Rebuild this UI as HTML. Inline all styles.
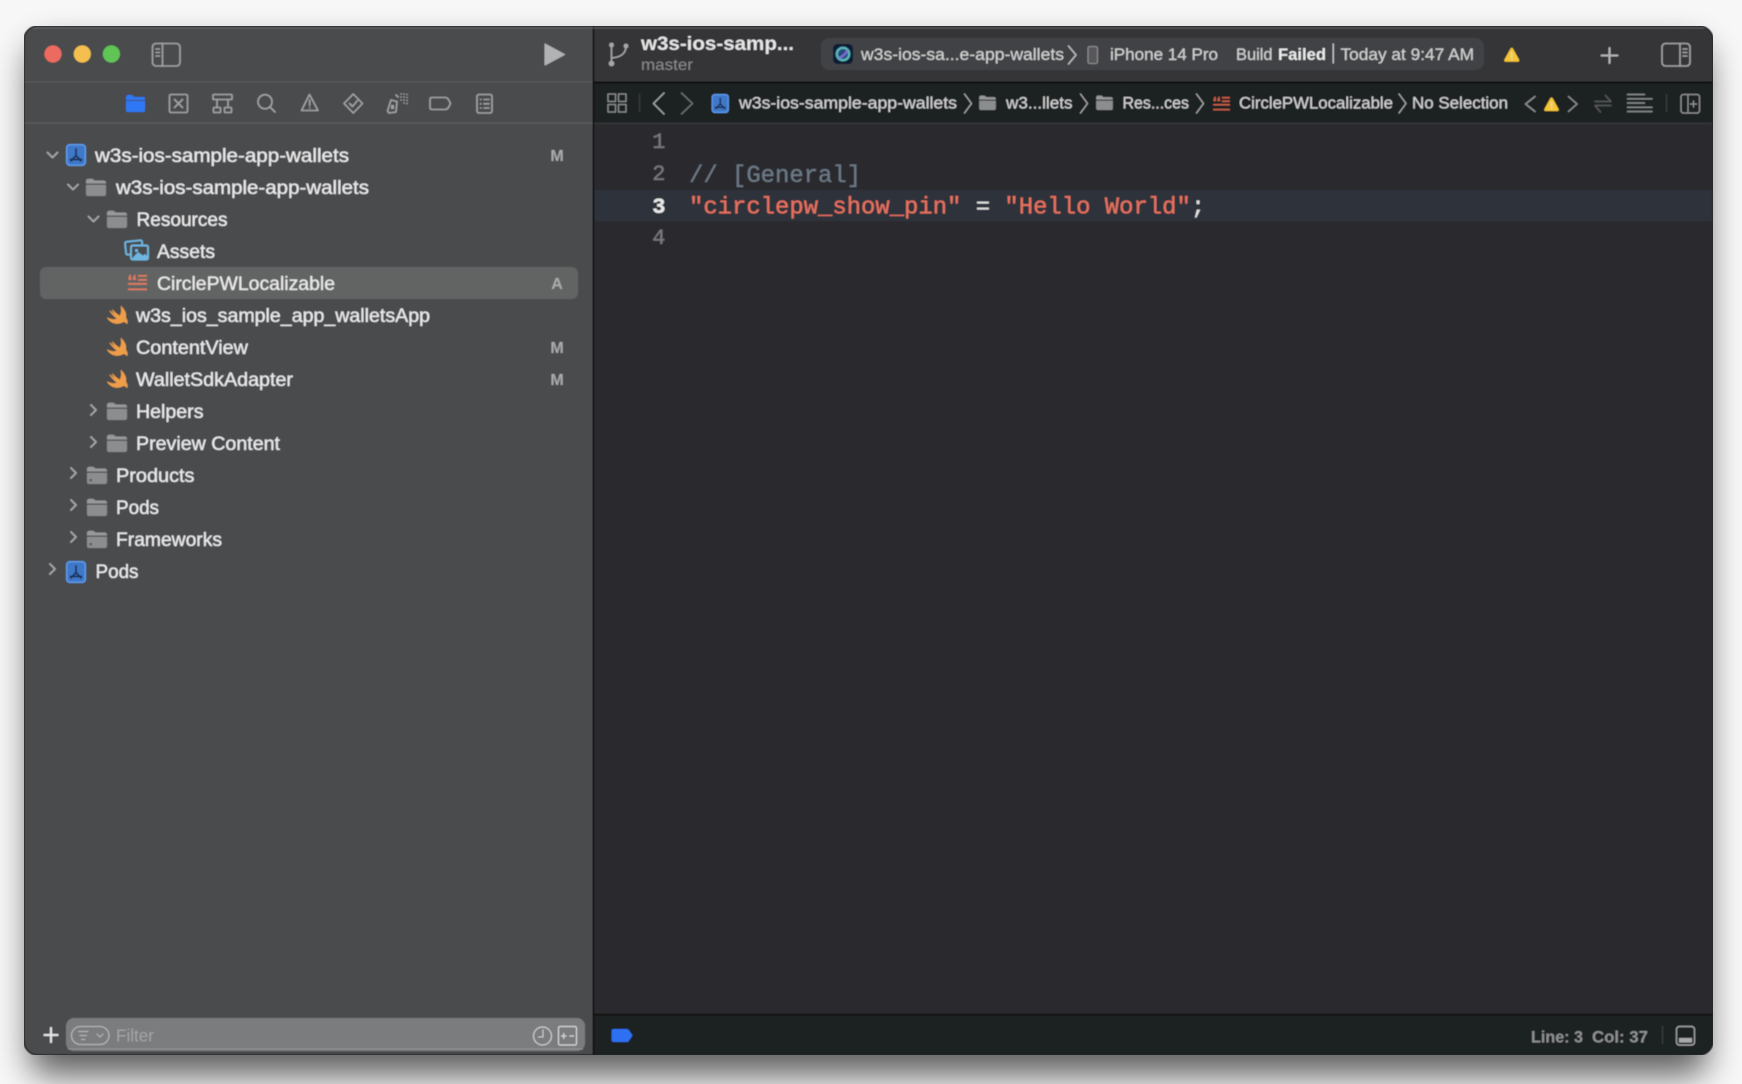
<!DOCTYPE html>
<html><head><meta charset="utf-8"><style>
html,body{margin:0;padding:0;background:#f7f7f7;width:1742px;height:1084px;overflow:hidden}
svg{display:block;position:absolute;left:0;top:0}
text{font-family:"Liberation Sans",sans-serif}
.m{font-family:"Liberation Mono",monospace}
.side{font-size:19.5px;fill:#e9e9ea;stroke:#e9e9ea;stroke-width:.3}
.nav{font-size:17px;fill:#d2d2d3;stroke:#d2d2d3;stroke-width:.15}
.top{font-size:17px;fill:#d0d0d1;stroke:#d0d0d1;stroke-width:.15}
.bdg{font-size:16px;font-weight:bold;fill:#a9aaab;text-anchor:middle}
.ic{fill:none;stroke:#a2a3a5;stroke-width:1.6;stroke-linecap:round;stroke-linejoin:round}
.chev{fill:none;stroke:#a5a6a7;stroke-width:1.9;stroke-linecap:round;stroke-linejoin:round}
.bc{fill:none;stroke:#a8a8a9;stroke-width:1.3;stroke-linecap:round;stroke-linejoin:round}
.ln{font-size:22px;fill:#77787c;stroke:#77787c;stroke-width:.3;text-anchor:end}
</style></head><body>
<svg width="1742" height="1084" viewBox="0 0 1742 1084" xmlns="http://www.w3.org/2000/svg">
<defs>
<filter id="sh" x="-10%" y="-10%" width="120%" height="120%"><feGaussianBlur stdDeviation="17"/></filter>
<filter id="b" x="0" y="0" width="100%" height="100%"><feGaussianBlur stdDeviation="0.6"/></filter>
<clipPath id="win"><rect x="24" y="26" width="1689" height="1029" rx="14"/></clipPath>
<symbol id="folder" viewBox="0 0 20 18" overflow="visible">
<path d="M0 3.5C0 1.5 1 .8 2.3.8H6.5L8.5 2.5H17.7C19 2.5 20 3.3 20 4.8V5.5H0Z" fill="#98999b"/>
<path d="M0 6.7H20V16C20 17.2 19.2 18 18 18H2C.8 18 0 17.2 0 16Z" fill="#8c8d8f"/>
</symbol>
<symbol id="folder2" viewBox="0 0 20 18" overflow="visible">
<path d="M0 3.5C0 1.5 1 .8 2.3.8H6.5L8.5 2.5H17.7C19 2.5 20 3.3 20 4.8V5.5H0Z" fill="#98999b"/>
<path d="M0 6.7H20V16C20 17.2 19.2 18 18 18H2C.8 18 0 17.2 0 16Z" fill="#8c8d8f"/>
<rect x="2.5" y="13" width="2.5" height="2.2" fill="#56575a"/>
</symbol>
<symbol id="proj" viewBox="0 0 20 22" overflow="visible">
<rect x=".7" y=".7" width="18.6" height="20.6" rx="3" fill="#3f78c9" stroke="#5f9cec" stroke-width="1.4"/>
<path d="M10 5V11.5M10 11.5L5 17M10 11.5L15 17M4.5 15.5H15.5" fill="none" stroke="#1e3358" stroke-width="1.8" stroke-linecap="round"/>
</symbol>
<symbol id="swift" viewBox="0 0 20 18" overflow="visible">
<path d="M13.5 0C17 3 19 7.5 18 11C19.3 13 20 15.2 19.5 17C18.3 15.4 16.5 14.7 14.8 15.6C10.5 18 4 17.2 0 11.5C3.5 13.5 7.5 13.7 10 12.3C7 10 4.5 7.5 2.5 4.5C5 6.8 7.5 8.8 9.5 10C7.5 8 6 6 5 3.5C8 6.8 10.5 8.8 12.5 9.6C14 7 14.5 3.5 13.5 0Z" fill="#ee9d48" stroke="#ee9d48" stroke-width=".9" stroke-linejoin="round"/>
</symbol>
<symbol id="warn" viewBox="0 0 16 15" overflow="visible">
<path d="M8 .5C8.6.5 9 .9 9.3 1.4L15.6 12.8C16.1 13.8 15.5 15 14.4 15H1.6C.5 15-.1 13.8.4 12.8L6.7 1.4C7 .9 7.4.5 8 .5Z" fill="#f4c534"/>
<rect x="7.1" y="5" width="1.8" height="5.5" fill="#e8dfb8" opacity=".75"/>
<rect x="7.1" y="11.4" width="1.8" height="1.8" fill="#e8dfb8" opacity=".75"/>
</symbol>
<symbol id="strs" viewBox="0 0 19 17" overflow="visible">
<path d="M.5 4.5C.5 2 1.5.8 3 .4V2C2.5 2.3 2.3 2.8 2.3 3H3.4V6H.5ZM5 4.5C5 2 6 .8 7.5.4V2C7 2.3 6.8 2.8 6.8 3H7.9V6H5Z" fill="currentColor"/>
<rect x="10" y="1" width="9" height="1.8" fill="currentColor"/><rect x="10" y="5" width="9" height="1.8" fill="currentColor"/>
<rect x="0" y="9" width="19" height="1.8" fill="currentColor"/><rect x="0" y="14.5" width="19" height="1.8" fill="currentColor"/>
</symbol>
</defs>

<rect x="30" y="46" width="1677" height="1029" rx="16" fill="#000" opacity=".62" filter="url(#sh)"/>

<g filter="url(#b)">
<g clip-path="url(#win)">
<rect x="24" y="26" width="570" height="1029" fill="#4a4b4d"/>
<rect x="594" y="26" width="1119" height="57" fill="#353638"/>
<rect x="594" y="83" width="1119" height="40" fill="#1f2022"/>
<rect x="594" y="123" width="1119" height="892" fill="#292a2f"/>
<rect x="594" y="1015" width="1119" height="40" fill="#1f2022"/>
<rect x="594" y="190" width="1119" height="31" fill="#2f323a"/>
<rect x="24" y="81.5" width="570" height="1" fill="#5d5e60"/>
<rect x="24" y="122.5" width="570" height="1.2" fill="#5d5e60"/>
<rect x="594" y="81.5" width="1119" height="1.8" fill="#0f0f10"/>
<rect x="594" y="122.8" width="1119" height="1" fill="#3c3d40"/>
<rect x="594" y="1013.8" width="1119" height="1.6" fill="#0f0f11"/>
<rect x="592.6" y="26" width="1.6" height="1029" fill="#101011"/>
<rect x="24" y="27.5" width="1689" height="1" fill="#69696b" opacity=".8"/>
</g>
<rect x="24" y="26" width="1689" height="1029" rx="14" fill="none" stroke="#202021" stroke-width="1.5"/>

<!-- traffic lights -->
<circle cx="53" cy="54" r="8.6" fill="#ec6a5e"/>
<circle cx="82.3" cy="54" r="8.6" fill="#f4bf4f"/>
<circle cx="111.4" cy="54" r="8.6" fill="#61c554"/>
<rect x="152.5" y="43.5" width="27.5" height="22.5" rx="3.5" class="ic"/>
<path d="M162.5 43.5V66" class="ic"/>
<path d="M156 49H159.5M156 52.5H159.5M156 56H159.5" class="ic" stroke-width="1.1"/>
<path d="M545 44V65L564.5 54.5Z" fill="#b1b2b3" stroke="#b1b2b3" stroke-width="1" stroke-linejoin="round"/>

<!-- navigator tabs -->
<path d="M126 99C126 96 127 95 128 95H132L134 97H143.5C144.5 97 145 97.8 145 99V100H126Z" fill="#2f78f6"/>
<path d="M126 101H145V110.5C145 111.5 144.5 112 143.5 112H127.5C126.5 112 126 111.5 126 110.5Z" fill="#2f78f6"/>
<rect x="169.5" y="94.5" width="18" height="18" rx="1.5" class="ic"/>
<path d="M174.5 99.5L182.5 107.5M182.5 99.5L174.5 107.5" class="ic"/>
<rect x="213" y="94.5" width="19" height="5" rx=".8" class="ic"/>
<path d="M217 99.5V107.5M228 99.5V107.5" class="ic"/>
<rect x="213.5" y="107.5" width="7" height="5" rx=".8" class="ic"/><rect x="224.5" y="107.5" width="7" height="5" rx=".8" class="ic"/>
<circle cx="265" cy="101.7" r="7" class="ic"/><path d="M270 107L275 112" class="ic" stroke-width="2"/>
<path d="M309.5 94.5L301.5 110.5H318Z" class="ic"/><path d="M309.7 100V105.5" class="ic"/><path d="M309.7 108H309.8" class="ic"/>
<path d="M353.3 94L362.5 103.5L353.3 113L344 103.5Z" class="ic"/><path d="M349.5 103.5L352.5 106.5L357.5 100.5" class="ic"/>
<path d="M391 100L397 101.5L396 112L389 113L387.5 111Z" class="ic"/><rect x="391" y="105" width="3" height="4" fill="#a2a3a5"/>
<path d="M396 95L398 97M401 94H401.2M404 94H404.2M407 94.5H407.2M401 97H401.2M404 97H404.2M407 97.5H407.2M401 100H401.2M404 100H404.2M407 100.5H407.2M404 103H404.2M407 103.5H407.2" class="ic" stroke-width="1.1"/>
<path d="M432 97.5H445C447 97.5 448 98 450.5 103.5C448 109 447 109.5 445 109.5H432C430.8 109.5 430 108.7 430 107.5V99.5C430 98.3 430.8 97.5 432 97.5Z" class="ic"/>
<rect x="477" y="94.5" width="15" height="18.5" rx="2" class="ic"/>
<path d="M480.5 99.5H481M484 99.5H489M480.5 103.8H481M484 103.8H489M480.5 108H481M484 108H489" class="ic" stroke-width="1.3"/>

<!-- selected row -->
<rect x="40" y="267" width="538" height="32" rx="6" fill="#626364"/>

<!-- tree chevrons -->
<path d="M47.5 152.5L52.5 157.5L57.5 152.5" class="chev"/>
<path d="M68 184.5L73 189.5L78 184.5" class="chev"/>
<path d="M88.5 216.5L93.5 221.5L98.5 216.5" class="chev"/>
<path d="M91 405L96 410L91 415M91 437L96 442L91 447M71 468L76 473L71 478M71 500L76 505L71 510M71 532L76 537L71 542M50 564L55 569L50 574" class="chev"/>

<!-- tree icons -->
<use href="#proj" x="66" y="144" width="20" height="22"/>
<use href="#folder" x="86" y="178" width="20" height="18"/>
<use href="#folder" x="107" y="210" width="20" height="18"/>
<g fill="none" stroke="#6fb6e0" stroke-width="1.9" stroke-linejoin="round">
<rect x="125.5" y="241" width="17" height="13" rx="1.5" transform="rotate(-6 134 247)"/>
<rect x="131" y="245.5" width="17" height="14" rx="1.5" fill="#4a4b4d"/>
<path d="M131.5 259L138 252L143 255.5L145 254L148 256.5V259.5H131.5Z" fill="#6fb6e0" stroke="none"/>
<circle cx="136.5" cy="250.5" r="1.6" fill="#6fb6e0" stroke="none"/>
</g>
<use href="#strs" x="128" y="274" width="19" height="17" color="#de7a5e"/>
<use href="#swift" x="107.5" y="306.5" width="20" height="18"/>
<use href="#swift" x="107.5" y="338.5" width="20" height="18"/>
<use href="#swift" x="107.5" y="370.5" width="20" height="18"/>
<use href="#folder" x="107" y="402" width="20" height="18"/>
<use href="#folder" x="107" y="434" width="20" height="18"/>
<use href="#folder2" x="87" y="466" width="20" height="18"/>
<use href="#folder" x="87" y="498" width="20" height="18"/>
<use href="#folder2" x="87" y="530" width="20" height="18"/>
<use href="#proj" x="66" y="561" width="20" height="22"/>

<!-- tree text -->
<text class="side" x="95" y="162" textLength="254" lengthAdjust="spacingAndGlyphs">w3s-ios-sample-app-wallets</text>
<text class="side" x="116" y="194" textLength="253" lengthAdjust="spacingAndGlyphs">w3s-ios-sample-app-wallets</text>
<text class="side" x="136.5" y="226" textLength="91" lengthAdjust="spacingAndGlyphs">Resources</text>
<text class="side" x="157" y="258" textLength="58" lengthAdjust="spacingAndGlyphs">Assets</text>
<text class="side" x="157" y="290" textLength="178" lengthAdjust="spacingAndGlyphs">CirclePWLocalizable</text>
<text class="side" x="136" y="322" textLength="294" lengthAdjust="spacingAndGlyphs">w3s_ios_sample_app_walletsApp</text>
<text class="side" x="136" y="354" textLength="112" lengthAdjust="spacingAndGlyphs">ContentView</text>
<text class="side" x="136" y="386" textLength="157" lengthAdjust="spacingAndGlyphs">WalletSdkAdapter</text>
<text class="side" x="136" y="418" textLength="67.5" lengthAdjust="spacingAndGlyphs">Helpers</text>
<text class="side" x="136" y="450" textLength="144" lengthAdjust="spacingAndGlyphs">Preview Content</text>
<text class="side" x="116" y="482" textLength="78.5" lengthAdjust="spacingAndGlyphs">Products</text>
<text class="side" x="116" y="514" textLength="43" lengthAdjust="spacingAndGlyphs">Pods</text>
<text class="side" x="116" y="546" textLength="106" lengthAdjust="spacingAndGlyphs">Frameworks</text>
<text class="side" x="95.5" y="578" textLength="43" lengthAdjust="spacingAndGlyphs">Pods</text>
<text class="bdg" x="557" y="161">M</text>
<text class="bdg" x="557" y="289">A</text>
<text class="bdg" x="557" y="353">M</text>
<text class="bdg" x="557" y="385">M</text>

<!-- filter bar -->
<path d="M51 1028V1042M44.5 1035H57.5" stroke="#e4e4e4" stroke-width="2.2" stroke-linecap="round"/>
<rect x="66" y="1018" width="519" height="33" rx="8" fill="#7a7b7d"/>
<rect x="68" y="1048.5" width="515" height="1" fill="#949597"/>
<rect x="71.5" y="1026.5" width="37.5" height="18" rx="9" fill="none" stroke="#b3b4b5" stroke-width="1.3"/>
<path d="M78.5 1031.5H88M80 1035.5H86.5M81.5 1039.5H85M97 1034L100 1037L103 1034" fill="none" stroke="#b3b4b5" stroke-width="1.2" stroke-linecap="round"/>
<text x="116" y="1041.5" font-size="17.5" fill="#a4a5a7" textLength="38" lengthAdjust="spacingAndGlyphs">Filter</text>
<circle cx="542.5" cy="1036" r="9" fill="none" stroke="#d0d0d1" stroke-width="1.2"/>
<path d="M543 1029.5V1037H538" fill="none" stroke="#d0d0d1" stroke-width="1.1"/>
<rect x="558.5" y="1026.5" width="18" height="18.5" rx="1.5" fill="none" stroke="#d8d8d9" stroke-width="1.2"/>
<path d="M561 1036H566.5M563.7 1033V1039M569.5 1036H574" stroke="#d8d8d9" stroke-width="1.2"/>

<!-- scheme/title -->
<circle cx="611.5" cy="45" r="2.4" fill="#a6a7a8"/><circle cx="611.5" cy="63.5" r="2.8" fill="#a6a7a8"/><circle cx="626" cy="46" r="2.4" fill="#a6a7a8"/>
<path d="M611.5 46V63M611.5 58C617 57.5 626 56 626 46" fill="none" stroke="#a6a7a8" stroke-width="1.6"/>
<text x="641" y="50" font-size="19" font-weight="bold" fill="#e6e6e7" textLength="153" lengthAdjust="spacingAndGlyphs">w3s-ios-samp...</text>
<text x="641" y="70" font-size="16" fill="#88898b" textLength="52" lengthAdjust="spacingAndGlyphs">master</text>
<rect x="821" y="38" width="663" height="32" rx="8" fill="#414244"/>
<rect x="833" y="44" width="20" height="20" rx="4.5" fill="#0f1a35"/>
<circle cx="843" cy="54" r="6.2" fill="#2a4a7a" stroke="#58b5b5" stroke-width="2.4"/><path d="M838.5 58C842 57 846 54 847.5 50" fill="none" stroke="#7a70d8" stroke-width="2.2"/>
<text class="top" x="861" y="60" textLength="203" lengthAdjust="spacingAndGlyphs">w3s-ios-sa...e-app-wallets</text>
<path d="M1068.5 46L1076 55L1068.5 64" class="bc" style="stroke:#bcbcbd;stroke-width:1.5"/>
<rect x="1088" y="46.5" width="9.5" height="17" rx="1.8" fill="#58595b" stroke="#909192" stroke-width="1.1"/>
<text class="top" x="1110" y="60" textLength="108" lengthAdjust="spacingAndGlyphs">iPhone 14 Pro</text>
<text class="top" x="1236" y="60" textLength="36.5" lengthAdjust="spacingAndGlyphs">Build</text>
<text class="top" x="1278" y="60" font-weight="bold" style="fill:#ececec;stroke:none" textLength="48" lengthAdjust="spacingAndGlyphs">Failed</text>
<rect x="1332.6" y="43.5" width="1.3" height="20" fill="#cfcfd0"/>
<text class="top" x="1340.5" y="60" textLength="133.5" lengthAdjust="spacingAndGlyphs">Today at 9:47 AM</text>
<use href="#warn" x="1504" y="47" width="15.5" height="15"/>
<path d="M1609.5 48V63M1601.5 55.5H1617.5" stroke="#b1b2b3" stroke-width="2.1" stroke-linecap="round"/>
<rect x="1662" y="43.5" width="28" height="22.5" rx="3.5" class="ic"/>
<path d="M1680 43.5V66" class="ic"/><path d="M1683 49H1687M1683 52.5H1687M1683 56H1687" class="ic" stroke-width="1.1"/>

<!-- jump bar -->
<g class="ic" stroke="#8e8f90" style="stroke-width:1.3;stroke:#8e8f90">
<rect x="608" y="94" width="7.5" height="7.5"/><rect x="618.5" y="94" width="7.5" height="7.5"/>
<rect x="608" y="104.5" width="7.5" height="7.5"/><rect x="618.5" y="104.5" width="7.5" height="7.5"/>
</g>
<rect x="639" y="94" width="1.2" height="18" fill="#3c3d3f"/>
<path d="M664 93L653.5 103.5L664 114" fill="none" stroke="#a5a6a7" stroke-width="1.5" stroke-linecap="round" stroke-linejoin="round"/>
<path d="M681.5 93L692.5 103.5L681.5 114" fill="none" stroke="#707173" stroke-width="1.5" stroke-linecap="round" stroke-linejoin="round"/>
<use href="#proj" x="710.5" y="94" width="19.5" height="19"/>
<text class="nav" x="739" y="108.5" textLength="218" lengthAdjust="spacingAndGlyphs">w3s-ios-sample-app-wallets</text>
<path d="M964.5 94L971.5 103.5L964.5 113" class="bc"/>
<use href="#folder" x="978" y="95" width="19" height="15"/>
<text class="nav" x="1006" y="108.5" textLength="66.5" lengthAdjust="spacingAndGlyphs">w3...llets</text>
<path d="M1080.5 94L1087.5 103.5L1080.5 113" class="bc"/>
<use href="#folder" x="1095" y="95" width="19" height="15"/>
<text class="nav" x="1122.5" y="108.5" textLength="66.5" lengthAdjust="spacingAndGlyphs">Res...ces</text>
<path d="M1196.5 94L1203.5 103.5L1196.5 113" class="bc"/>
<use href="#strs" x="1212" y="96" width="19" height="15" color="#c9614a"/>
<text class="nav" x="1239" y="108.5" textLength="154" lengthAdjust="spacingAndGlyphs">CirclePWLocalizable</text>
<path d="M1399 94L1406 103.5L1399 113" class="bc"/>
<text class="nav" x="1412" y="108.5" textLength="96" lengthAdjust="spacingAndGlyphs">No Selection</text>
<path d="M1535 96.5L1525.5 104L1535 111.5" fill="none" stroke="#8f9091" stroke-width="1.5" stroke-linecap="round" stroke-linejoin="round"/>
<use href="#warn" x="1544" y="96.5" width="15" height="15"/>
<path d="M1568.5 96.5L1577 104L1568.5 111.5" fill="none" stroke="#8f9091" stroke-width="1.5" stroke-linecap="round" stroke-linejoin="round"/>
<path d="M1595 101.5H1611L1605.5 95.5M1611 105.5H1595L1600.5 112" fill="none" stroke="#58595b" stroke-width="1.5" stroke-linecap="round" stroke-linejoin="round"/>
<path d="M1627 94.5H1645M1627 98.8H1652.5M1627 103H1645M1627 107.3H1652.5M1627 111.5H1652.5" stroke="#8e8f90" stroke-width="1.4"/>
<rect x="1666" y="94" width="1.2" height="18" fill="#3c3d3f"/>
<rect x="1681" y="94.5" width="18.5" height="18.5" rx="2.5" fill="none" stroke="#949596" stroke-width="1.3"/>
<path d="M1688 94.5V113M1693.5 100.5V107.5M1690 104H1697" fill="none" stroke="#949596" stroke-width="1.2"/>

<!-- editor -->
<text class="m ln" x="665.5" y="148">1</text>
<text class="m ln" x="665.5" y="180">2</text>
<text class="m ln" x="665.5" y="213" style="fill:#e8e8e8;stroke:#e8e8e8" font-weight="bold">3</text>
<text class="m ln" x="665.5" y="244">4</text>
<text class="m" x="689" y="182" font-size="23.9" fill="#6c7986" stroke="#6c7986" stroke-width=".2" xml:space="preserve">// [General]</text>
<text class="m" x="689" y="213.5" font-size="23.9" fill="#e5715f" stroke="#e5715f" stroke-width=".3" xml:space="preserve">"circlepw_show_pin"<tspan fill="#dfdfe0" stroke="#dfdfe0"> = </tspan>"Hello World"<tspan fill="#dfdfe0" stroke="#dfdfe0">;</tspan></text>

<!-- status bar -->
<path d="M613.5 1029H627C628 1029 628.6 1029.6 629 1030.3L632.6 1035.5L629 1040.7C628.6 1041.4 628 1042 627 1042H613.5C612.4 1042 611.6 1041.2 611.6 1040V1031C611.6 1029.8 612.4 1029 613.5 1029Z" fill="#2f6ff2"/>
<text x="1531" y="1042.5" font-size="17" font-weight="bold" fill="#8f9091" textLength="52" lengthAdjust="spacingAndGlyphs">Line: 3</text>
<text x="1592" y="1042.5" font-size="17" font-weight="bold" fill="#8f9091" textLength="56" lengthAdjust="spacingAndGlyphs">Col: 37</text>
<rect x="1662" y="1026" width="1.2" height="18" fill="#3c3d3f"/>
<rect x="1676.5" y="1026.5" width="18" height="18.5" rx="3" fill="none" stroke="#a2a3a5" stroke-width="1.4"/>
<rect x="1679" y="1038" width="13" height="4.5" fill="#a8a9aa"/>
</g>
</svg>
</body></html>
